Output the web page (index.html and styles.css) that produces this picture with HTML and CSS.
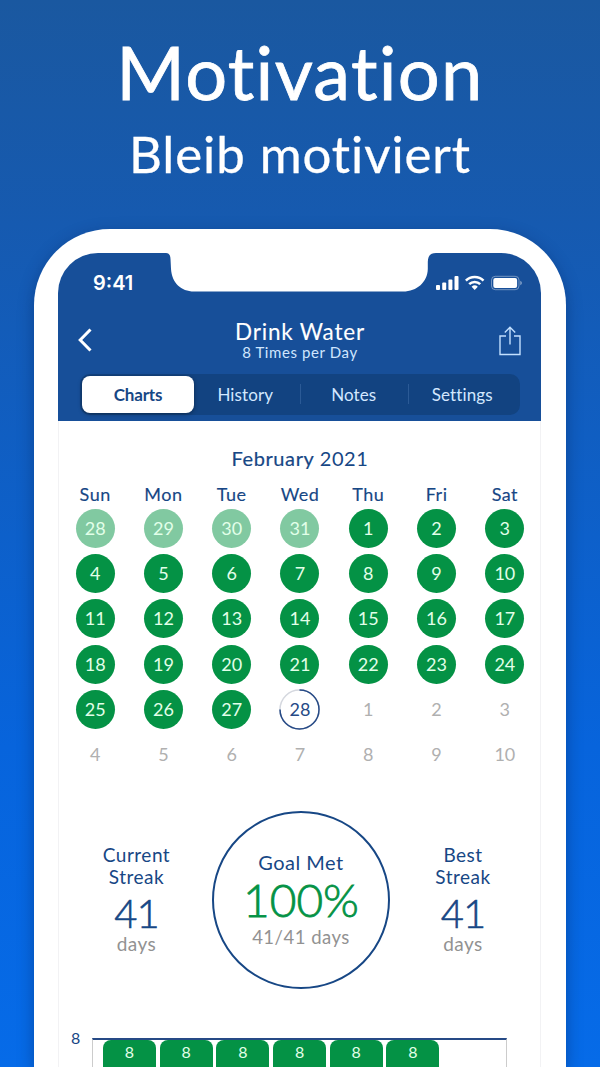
FILE: index.html
```html
<!DOCTYPE html>
<html lang="de">
<head>
    <meta charset="UTF-8">
    <meta name="viewport" content="width=device-width, initial-scale=1.0">
    <title>Motivation</title>
    <link rel="stylesheet" href="styles.css">
</head>
<body>

    <div class="hero">
        <h1>Motivation</h1>
        <h2>Bleib motiviert</h2>
    </div>

    <div class="phone">
        <div class="screen">
            <header>
                <svg class="notch" width="272" height="40" viewBox="0 0 272 40">
                    <path d="M0 -1V0C3 0 4.300 2 4.500 6L5 16C6 30 15 38.500 28 38.500H237C251 38.500 261.500 29 261.800 16V9C262 3 264 0 270 0V-1Z" fill="#fff"/>
                </svg>

                <div class="status">
                    <span class="time">9:41</span>
                    <svg width="86" height="16" viewBox="0 0 86 16" fill="#fff">
                        <rect x="0" y="10" width="4" height="5" rx="1"/>
                        <rect x="6.200" y="7.500" width="4" height="7.500" rx="1"/>
                        <rect x="12.400" y="4.500" width="4" height="10.500" rx="1"/>
                        <rect x="18.500" y="1" width="4" height="14" rx="1"/>
                        <g fill="none" stroke="#fff" stroke-width="2.500">
                            <path d="M29.900 5.600A12.300 12.300 0 0 1 47.500 5.600"/>
                            <path d="M33.200 9.200A7.700 7.700 0 0 1 44.200 9.200"/>
                        </g>
                        <path d="M35.600 11.700A4.500 4.500 0 0 1 41.800 11.700L38.700 14.900Z"/>
                        <rect x="55.500" y="1.300" width="27.500" height="13.400" rx="3.800" fill="none" stroke="#fff" stroke-opacity=".4"/>
                        <rect x="57.300" y="3" width="23.800" height="10" rx="2"/>
                        <path d="M84.300 5.800C86.300 6.700 86.300 9.300 84.300 10.200Z" fill-opacity=".5"/>
                    </svg>
                </div>

                <div class="titlebar">
                    <svg class="back" width="14" height="24" viewBox="0 0 14 24">
                        <path d="M12.500 1.500L2.200 12L12.500 22.500" fill="none" stroke="#fff" stroke-width="3"/>
                    </svg>
                    <div class="title">
                        <h3>Drink Water</h3>
                        <p>8 Times per Day</p>
                    </div>
                    <svg class="share" width="22" height="30" viewBox="0 0 22 30">
                        <path d="M7 10H1V28.500H21V10H15M11 18.500V1.500M5.800 6.500L11 1.300L16.200 6.500" fill="none" stroke="#c3e0ff" stroke-width="1.400"/>
                    </svg>
                </div>

                <nav>
                    <a class="tab active">Charts</a>
                    <a class="tab">History</a>
                    <a class="tab">Notes</a>
                    <a class="tab">Settings</a>
                </nav>
            </header>

            <main>
                <h4><b>February</b> 2021</h4>

                <div class="weekdays">
                    <span>Sun</span><span>Mon</span><span>Tue</span><span>Wed</span><span>Thu</span><span>Fri</span><span>Sat</span>
                </div>
                <div class="calendar">
                    <span class="day past">28</span><span class="day past">29</span><span class="day past">30</span><span class="day past">31</span><span class="day">1</span><span class="day">2</span><span class="day">3</span>
                    <span class="day">4</span><span class="day">5</span><span class="day">6</span><span class="day">7</span><span class="day">8</span><span class="day">9</span><span class="day">10</span>
                    <span class="day">11</span><span class="day">12</span><span class="day">13</span><span class="day">14</span><span class="day">15</span><span class="day">16</span><span class="day">17</span>
                    <span class="day">18</span><span class="day">19</span><span class="day">20</span><span class="day">21</span><span class="day">22</span><span class="day">23</span><span class="day">24</span>
                    <span class="day">25</span><span class="day">26</span><span class="day">27</span>
                    <span class="day today">28
                        <svg class="ring" width="41" height="41" viewBox="0 0 41 41" fill="none" stroke-width="1.500">
                            <circle cx="20.500" cy="20.500" r="19.500" stroke="#d5d8df"/>
                            <path d="M20.500 1A19.500 19.500 0 1 1 1 20.500" stroke="#264a86"/>
                        </svg>
                    </span>
                    <span class="day next">1</span><span class="day next">2</span><span class="day next">3</span>
                    <span class="day next">4</span><span class="day next">5</span><span class="day next">6</span><span class="day next">7</span><span class="day next">8</span><span class="day next">9</span><span class="day next">10</span>
                </div>

                <div class="stats">
                    <div class="streak">
                        <p>Current<br>Streak</p>
                        <strong>41</strong>
                        <small>days</small>
                    </div>
                    <div class="goal">
                        <p>Goal Met</p>
                        <strong>100%</strong>
                        <small>41/41 days</small>
                    </div>
                    <div class="streak">
                        <p>Best<br>Streak</p>
                        <strong>41</strong>
                        <small>days</small>
                    </div>
                </div>

                <div class="chart">
                    <span class="axis">8</span>
                    <div class="bars">
                        <div class="bar">8</div>
                        <div class="bar">8</div>
                        <div class="bar">8</div>
                        <div class="bar">8</div>
                        <div class="bar">8</div>
                        <div class="bar">8</div>
                    </div>
                </div>
            </main>
        </div>
    </div>

</body>
</html>
```
FILE: styles.css
```css
* {
    margin: 0;
    padding: 0;
    box-sizing: border-box;
}

html {
    height: 1067px;
    overflow: hidden;
}

body {
    display: flex;
    flex-direction: column;
    width: 600px;
    height: 1067px;
    overflow: hidden;
    font-family: 'Lato', sans-serif;
    font-weight: 400;
    color: #174785;
    background: linear-gradient(#1a58a0 0%, #165ab0 21%, #0764dc 70%, #066be8 100%);
}

.hero {
    flex: none;
    height: 229px;
    padding-top: 32px;
    text-align: center;
    color: #fff;
}

.hero h1 {
    font-size: 74px;
    line-height: 80px;
    font-weight: 400;
    letter-spacing: 1.300px;
    -webkit-text-stroke: 0.8px #fff;
}

.hero h2 {
    margin-top: 12px;
    font-size: 51px;
    line-height: 60px;
    font-weight: 400;
    letter-spacing: 0.9px;
    -webkit-text-stroke: 0.3px #fff;
}

.phone {
    width: 532px;
    height: 838px;
    margin: 0 auto;
    padding: 24px 25px 0 24px;
    border-radius: 76px 76px 0 0;
    background-color: #fff;
    box-shadow: 0 5px 16px rgba(0, 30, 80, 0.4);
}

.screen {
    height: 100%;
    border-radius: 40px 40px 0 0;
    overflow: hidden;
}

header {
    position: relative;
    height: 168px;
    padding: 0 21px 0 22px;
    background-color: #174f99;
}

/* camera notch over the status bar */
.notch {
    position: absolute;
    top: 0;
    left: 108px;
    overflow: visible;
}

.status {
    display: flex;
    justify-content: space-between;
    align-items: center;
    height: 60px;
    margin-right: -2px;
    padding-left: 13px;
}

.time {
    font-family: 'Inter', sans-serif;
    font-size: 20px;
    font-weight: 600;
    color: #fff;
}

.titlebar {
    display: flex;
    justify-content: space-between;
    height: 61px;
    padding-top: 6px;
    color: #fff;
}

.back {
    margin-top: 9px;
    margin-left: -2px;
}

.share {
    margin-top: 7px;
    margin-right: -1px;
}

.title {
    padding-left: 9px;
    text-align: center;
}

.title h3 {
    font-size: 22.5px;
    line-height: 25px;
    font-weight: 400;
    letter-spacing: 0.8px;
    -webkit-text-stroke: 0.1px #fff;
}

.title p {
    font-size: 15px;
    line-height: 16px;
    letter-spacing: 0.6px;
    color: #cfe6ff;
}

nav {
    display: grid;
    grid-template-columns: 109px 108.5px 108.5px 108.5px;
    height: 41px;
    padding: 2px;
    border-radius: 10px;
    background-color: #124381;
}

.tab {
    position: relative;
    font-size: 17px;
    line-height: 38px;
    text-align: center;
    letter-spacing: 0.1px;
    color: #d3e8ff;
}

.tab.active {
    width: 112px;
    height: 37px;
    border-radius: 8px;
    background-color: #fff;
    color: #174785;
    font-weight: 700;
    letter-spacing: -0.2px;
    box-shadow: 0 1px 4px rgba(0, 0, 0, 0.4);
}

.tab + .tab + .tab::before {
    content: "";
    position: absolute;
    left: 0;
    top: 8px;
    width: 1px;
    height: 20px;
    background-color: #2b5a96;
}

main {
    height: 646px;
    padding: 25px 1px 0 2px;
    overflow: hidden;
    border: solid #f2f2f4;
    border-width: 0 1px;
}

h4 {
    font-size: 20px;
    line-height: 24px;
    font-weight: 400;
    text-align: center;
    letter-spacing: 0.6px;
}

h4 b {
    font-weight: 400;
    -webkit-text-stroke: 0.2px #174785;
}

.weekdays,
.calendar {
    display: grid;
    grid-template-columns: repeat(7, 1fr);
    justify-items: center;
}

.weekdays {
    margin-top: 12px;
    font-size: 18px;
    line-height: 24px;
    letter-spacing: 0.5px;
    -webkit-text-stroke: 0.15px #174785;
}

.calendar {
    grid-auto-rows: 45.2px;
    align-items: center;
}

.day {
    position: relative;
    width: 39px;
    height: 39px;
    border-radius: 50%;
    background-color: #049245;
    color: #e2ffe9;
    font-size: 18px;
    line-height: 39px;
    text-align: center;
}

.day.past {
    background-color: #81c9a1;
}

.day.next {
    background: none;
    color: #b0b0b0;
}

.day.today {
    background: none;
    color: #264a86;
}

.ring {
    position: absolute;
    top: -1px;
    left: -1px;
}

.stats {
    display: grid;
    grid-template-columns: 151px 178px 146px;
    align-items: start;
    margin-top: 34px;
    text-align: center;
}

.stats strong,
.stats small {
    display: block;
    font-weight: 400;
}

.stats p,
.stats small {
    font-size: 19px;
    line-height: 22px;
    letter-spacing: 0.5px;
}

.stats small {
    color: #929292;
}

.streak {
    padding-top: 33px;
}

.streak .unit {
    line-height: 14px;
}

.stats .streak strong {
    font-size: 40px;
    line-height: 50px;
    font-weight: 300;
    letter-spacing: -1px;
    -webkit-text-stroke: 0.6px #174785;
}

.stats .streak small {
    line-height: 12px;
}

.goal {
    height: 178px;
    padding-top: 38px;
    border: 2.5px solid #174785;
    border-radius: 50%;
}

.stats .goal p {
    font-size: 20px;
}

.stats .goal strong {
    font-size: 46px;
    line-height: 54px;
    font-weight: 300;
    color: #049245;
    -webkit-text-stroke: 0.8px #049245;
}

.stats .goal small {
    font-size: 18.5px;
    line-height: 20px;
}

.chart {
    display: flex;
    margin-top: 49px;
    padding-left: 10px;
}

.axis {
    width: 21px;
    line-height: 0;
    font-size: 16px;
}

.bars {
    display: flex;
    flex: none;
    gap: 3.700px;
    width: 415px;
    height: 40px;
    padding-left: 10px;
    border: 1px solid #ccc;
    border-top: 2px solid #264a86;
    border-bottom: none;
}

.bar {
    width: 53px;
    border-radius: 8px 8px 0 0;
    background-color: #049245;
    color: #e2ffe9;
    font-size: 16px;
    line-height: 23px;
    text-align: center;
}
```
